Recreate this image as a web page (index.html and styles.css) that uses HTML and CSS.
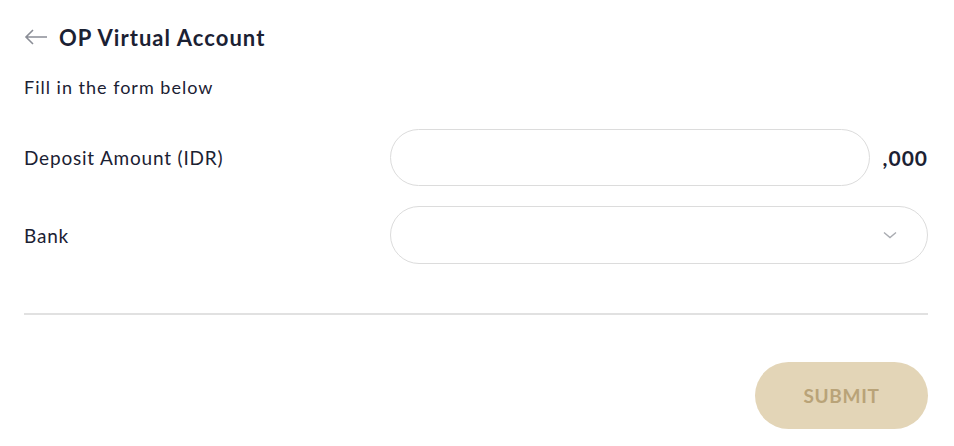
FILE: index.html
```html
<!DOCTYPE html>
<html lang="en">
<head>
    <meta charset="UTF-8">
    <meta name="viewport" content="width=device-width, initial-scale=1.0">
    <title>OP Virtual Account</title>
    <link rel="stylesheet" href="styles.css">
</head>
<body>
    <div class="deposit">
        <div class="header">
            <span class="back">
                <svg width="24" height="16" viewBox="0 0 24 16">
                    <path d="M23 8H2M9 1L2 8l7 7" fill="none" stroke="#8a8d96" stroke-width="1.6"/>
                </svg>
            </span>
            <h1>OP Virtual Account</h1>
        </div>

        <p class="hint">Fill in the form below</p>

        <div class="form">
            <div class="row">
                <label>Deposit Amount (IDR)</label>
                <div class="field">
                    <input class="pill" type="text">
                    <span class="suffix">,000</span>
                </div>
            </div>
            <div class="row">
                <label>Bank</label>
                <div class="field">
                    <div class="pill select">
                        <svg class="chevron" width="14" height="8" viewBox="0 0 14 8">
                            <path d="M1 1.5l6 5 6-5" fill="none" stroke="#a9abb1" stroke-width="1.4"/>
                        </svg>
                    </div>
                </div>
            </div>
        </div>

        <hr class="divider">

        <div class="actions">
            <button class="submit" disabled>SUBMIT</button>
        </div>
    </div>
</body>
</html>
```

FILE: styles.css
```css
body {
    font-family: Lato, 'Open Sans', sans-serif;
    margin: 0;
    background: #fff;
    color: #1b2133;
}

.deposit {
    padding: 21px 26px 0 24px;
}

.header {
    display: flex;
    align-items: center;
    gap: 11px;
    height: 32px;
}

.back {
    display: flex;
}

h1 {
    margin: 0;
    font-size: 22px;
    font-weight: 700;
    letter-spacing: 1.05px;
}

.hint {
    margin: 23px 0 0;
    font-size: 18px;
    line-height: 22px;
    letter-spacing: 1px;
}

.form {
    margin-top: 31px;
    display: flex;
    flex-direction: column;
    gap: 20px;
}

.row {
    display: flex;
    align-items: center;
}

.row label {
    width: 366px;
    font-size: 19px;
    letter-spacing: 0.8px;
}

.field {
    flex: 1;
    display: flex;
    align-items: center;
    gap: 13px;
}

.pill {
    flex: 1;
    height: 57px;
    box-sizing: border-box;
    border: 1px solid #dcdcdc;
    border-radius: 29px;
    background: #fff;
    font: inherit;
    padding: 0 24px;
    outline: none;
}

.select {
    display: flex;
    align-items: center;
    justify-content: flex-end;
    padding-right: 30px;
    height: 58px;
}

.suffix {
    font-size: 21px;
    font-weight: 700;
    letter-spacing: 1px;
}

.divider {
    margin: 49px 0 0;
    border: 0;
    border-top: 2px solid #e1e1e1;
}

.actions {
    display: flex;
    justify-content: flex-end;
    margin-top: 47px;
}

.submit {
    width: 173px;
    height: 67px;
    border: 0;
    border-radius: 34px;
    background: #e3d5b7;
    color: #b9a378;
    font-family: inherit;
    font-size: 19px;
    font-weight: 700;
    letter-spacing: 0.7px;
}
```
